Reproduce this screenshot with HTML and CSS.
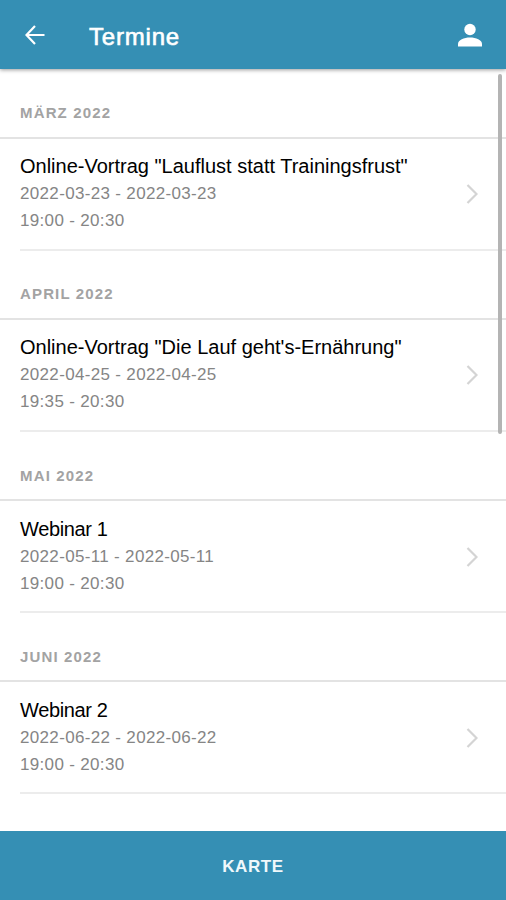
FILE: index.html
```html
<!DOCTYPE html>
<html lang="de">
<head>
    <meta charset="UTF-8">
    <meta name="viewport" content="width=device-width, initial-scale=1.0">
    <title>Termine</title>
    <link rel="stylesheet" href="styles.css">
</head>
<body>
    <header class="toolbar">
        <svg class="icon-back" viewBox="0 0 20 20"><path d="M10 1L1.500 10l8.500 9M1.500 10H19.500"/></svg>
        <h1>Termine</h1>
        <svg class="icon-user" viewBox="0 0 24 24"><circle cx="12" cy="6.500" r="5.700"/><path d="M0 23.500v-2.500C0 17 6 14.500 12 14.500s12 2.500 12 6.500v2.500z"/></svg>
    </header>

    <main class="content">
        <section class="month">
            <h2>MÄRZ 2022</h2>
            <div class="item">
                <div class="label">
                    <h3>Online-Vortrag "Lauflust statt Trainingsfrust"</h3>
                    <p>2022-03-23 - 2022-03-23</p>
                    <p>19:00 - 20:30</p>
                </div>
                <svg class="chevron" viewBox="0 0 12 20"><path d="M1.500 1L10.500 10l-9 9"/></svg>
            </div>
        </section>
        <section class="month">
            <h2>APRIL 2022</h2>
            <div class="item">
                <div class="label">
                    <h3>Online-Vortrag "Die Lauf geht's-Ernährung"</h3>
                    <p>2022-04-25 - 2022-04-25</p>
                    <p>19:35 - 20:30</p>
                </div>
                <svg class="chevron" viewBox="0 0 12 20"><path d="M1.500 1L10.500 10l-9 9"/></svg>
            </div>
        </section>
        <section class="month">
            <h2>MAI 2022</h2>
            <div class="item">
                <div class="label">
                    <h3 class="short">Webinar 1</h3>
                    <p>2022-05-11 - 2022-05-11</p>
                    <p>19:00 - 20:30</p>
                </div>
                <svg class="chevron" viewBox="0 0 12 20"><path d="M1.500 1L10.500 10l-9 9"/></svg>
            </div>
        </section>
        <section class="month">
            <h2>JUNI 2022</h2>
            <div class="item">
                <div class="label">
                    <h3 class="short">Webinar 2</h3>
                    <p>2022-06-22 - 2022-06-22</p>
                    <p>19:00 - 20:30</p>
                </div>
                <svg class="chevron" viewBox="0 0 12 20"><path d="M1.500 1L10.500 10l-9 9"/></svg>
            </div>
        </section>
        <div class="scrollbar"></div>
    </main>

    <footer class="footer">KARTE</footer>
</body>
</html>
```

FILE: styles.css
```css
* {
    box-sizing: border-box;
}

body {
    margin: 0;
    height: 900px;
    display: flex;
    flex-direction: column;
    overflow: hidden;
    font-family: "Liberation Sans", Arial, sans-serif;
    background: #fff;
}

h1, h2, h3, p {
    margin: 0;
}

.toolbar {
    height: 69px;
    flex-shrink: 0;
    display: flex;
    align-items: center;
    padding: 1px 24px 0 25px;
    background: #358fb4;
    color: #fff;
    box-shadow: 0 1px 4px rgba(0, 0, 0, 0.4);
    z-index: 1;
}

.toolbar h1 {
    flex: 1;
    margin-left: 44px;
    padding-top: 3px;
    font-size: 24px;
    font-weight: normal;
    letter-spacing: 0.8px;
    -webkit-text-stroke: 0.6px #fff;
}

.icon-back {
    width: 20px;
    height: 20px;
    fill: none;
    stroke: #fff;
    stroke-width: 2.2;
}

.icon-user {
    width: 24px;
    height: 24px;
    fill: #fff;
}

.content {
    position: relative;
    flex: 1;
    min-height: 0;
}

.month {
    height: 181.3px;
}

.month h2 {
    height: 69.5px;
    padding: 34px 20px 0;
    border-bottom: 2px solid #e3e3e3;
    font-size: 15px;
    line-height: 20px;
    letter-spacing: 1.15px;
    color: #a3a3a3;
}

.item {
    height: 112px;
    margin-left: 20px;
    padding-right: 28px;
    display: flex;
    align-items: center;
    border-bottom: 2px solid #ececec;
}

.label {
    flex: 1;
}

.label h3 {
    font-size: 20px;
    font-weight: normal;
    line-height: 27px;
    color: #000;
}

.label .short {
    letter-spacing: -0.35px;
}

.label p {
    font-size: 17px;
    line-height: 27px;
    letter-spacing: 0.33px;
    color: #858585;
}

.chevron {
    width: 12px;
    height: 20px;
    margin-top: 1px;
    fill: none;
    stroke: #d4d4d4;
    stroke-width: 2.2;
}

.scrollbar {
    position: absolute;
    top: 5px;
    right: 4px;
    width: 4px;
    height: 360px;
    border-radius: 2px;
    background: #b4b4b4;
}

.footer {
    height: 69px;
    flex-shrink: 0;
    display: flex;
    align-items: center;
    justify-content: center;
    padding-top: 2px;
    background: #358fb4;
    color: #f0f8fb;
    font-size: 17px;
    font-weight: bold;
    letter-spacing: 0.6px;
}
```
